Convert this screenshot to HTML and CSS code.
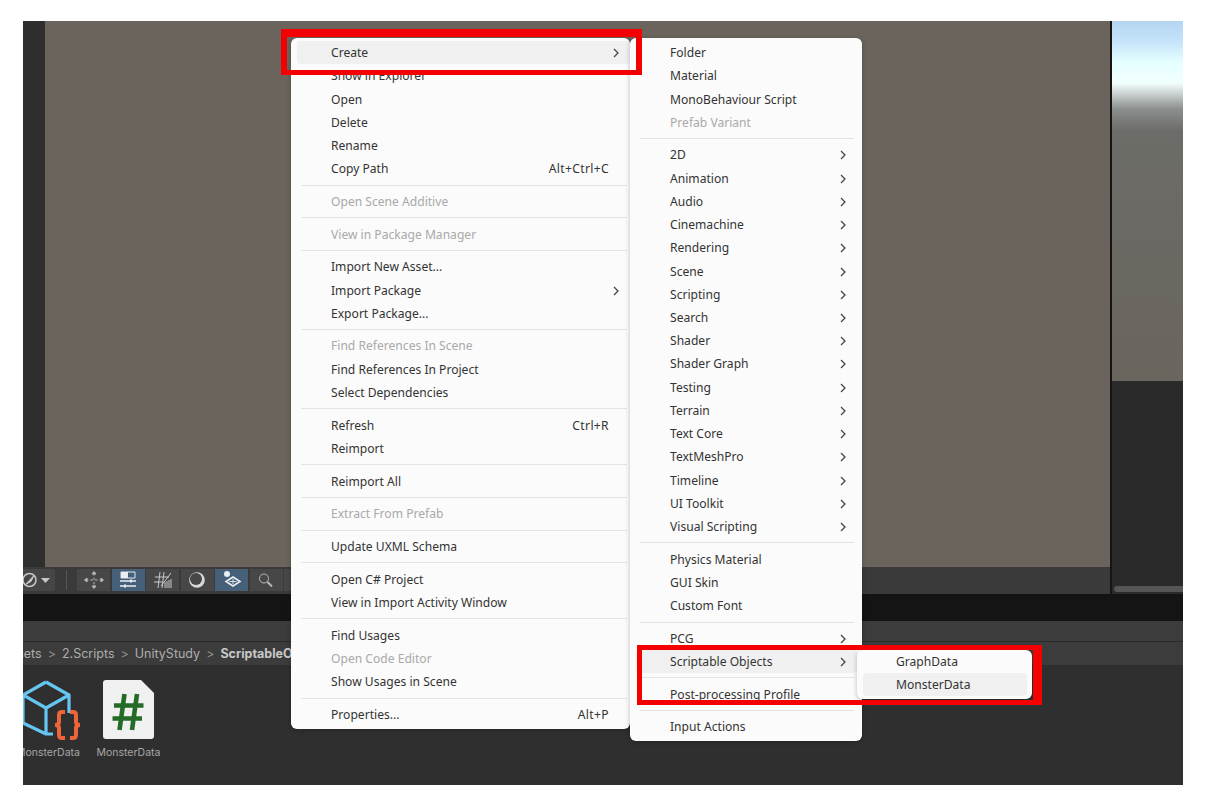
FILE: index.html
```html
<!DOCTYPE html>
<html lang="en">
<head>
<meta charset="utf-8">
<title>Unity Create Scriptable Object menu</title>
<link rel="stylesheet" href="styles.css">
</head>
<body>
<div class="app">
  <div class="upper">
    <div class="strip"></div>
    <div class="scene">
      <div class="viewport"></div>
      <div class="toolbar">
        <div class="tool-drop">
          <svg width="32" height="22" viewBox="0 0 32 22"><circle cx="6.500" cy="11" r="6.500" fill="none" stroke="#c8c8c8" stroke-width="1.500"/><path d="M2.500 15.500 11 6.500 8 12.500z" fill="#c8c8c8" stroke="#c8c8c8"/><path d="M18 9h9l-4.500 5z" fill="#c8c8c8"/></svg>
        </div>
        <div class="tool-sep"></div>
        <div class="tool-group">
          <div class="tool"><svg width="22" height="20" viewBox="0 0 22 20" fill="none" stroke="#b8b8b8" stroke-width="1"><path d="M11 3v14M3 10h16" stroke-dasharray="2.500 2"/><path d="M9 4l2-2.500L13 4zM9 16l2 2.500L13 16zM4 8l-2.500 2L4 12zM18 8l2.500 2L18 12z" fill="#b8b8b8"/></svg></div>
          <div class="tool on"><svg width="22" height="20" viewBox="0 0 22 20"><path d="M4 2h14v6H4z" fill="none" stroke="#dfe6ec"/><path d="M4 2h7v6H4z" fill="#e8eef2"/><path d="M3 11h16M3 16h16" stroke="#e8eef2" stroke-width="1.300"/><path d="M13 9.500h2v3h-2zM7 14.500h2v3H7z" fill="#e8eef2"/></svg></div>
          <div class="tool"><svg width="22" height="20" viewBox="0 0 22 20" fill="none" stroke="#c8c8c8" stroke-width="1"><path d="M8 2 6 18M12 2l-2 16M3 7h14M2 12h8M19 3 9 16M13 18v-6M15 18v-7M17 18v-8M19 18V9"/></svg></div>
          <div class="tool"><svg width="22" height="20" viewBox="0 0 22 20"><circle cx="11" cy="10" r="7.800" fill="#d8d8d8"/><circle cx="10" cy="9" r="6" fill="#474747"/></svg></div>
          <div class="tool on"><svg width="22" height="20" viewBox="0 0 22 20"><circle cx="6" cy="4" r="3" fill="#e8eef2"/><path d="M12 7l7 4.500-7 4.500-7-4.500z" fill="none" stroke="#e8eef2" stroke-width="1.600"/><path d="M8.500 11.500h7M12 9v5" stroke="#e8eef2" stroke-width=".9"/></svg></div>
          <div class="tool"><svg width="22" height="20" viewBox="0 0 22 20" fill="none" stroke="#b8b8b8"><circle cx="9" cy="8.500" r="4.500"/><path d="M12.500 12 17 16.500" stroke-width="2"/></svg></div>
          <div class="tool"></div>
        </div>
      </div>
    </div>
    <div class="side">
      <div class="sky"></div>
      <div class="inspector"><div class="scrollbar"></div></div>
    </div>
  </div>
  <div class="band"></div>
  <div class="tabs"></div>
  <div class="path">
    <span>Assets</span><i>&gt;</i><span>2.Scripts</span><i>&gt;</i><span>UnityStudy</span><i>&gt;</i><b>ScriptableObjects</b>
  </div>
  <div class="assets">
    <div class="asset asset-so">
      <svg width="70" height="60" viewBox="0 0 70 60" fill="none">
        <path d="M33 2 56 15V33M33 2 10 15V43L33 54H40M10 15 33 28 56 15M33 28V54" stroke="#66c6f2" stroke-width="3.200" stroke-linejoin="round"/>
        <path d="M52 32h-3q-3 0-3 3v7q0 3-4 3q4 0 4 3v7q0 3 3 3h3M57 32h3q3 0 3 3v7q0 3 4 3q-4 0-4 3v7q0 3-3 3h-3" stroke="#f0643a" stroke-width="4"/>
      </svg>
      <div class="asset-name">MonsterData</div>
    </div>
    <div class="asset asset-cs">
      <svg class="script" width="51" height="59" viewBox="0 0 51 59">
        <path d="M3 0H38L51 13V56Q51 59 48 59H3Q0 59 0 56V3Q0 0 3 0z" fill="#f0f0f0"/>
        <path d="M21.500 14 16.500 50M34 14 29 50M11 25.500H40.500M9.500 38.500H39" stroke="#236b27" stroke-width="4.600" fill="none"/>
      </svg>
      <div class="asset-name">MonsterData</div>
    </div>
  </div>

  <div class="menu menu-main">
    <div class="row hot"><span>Create</span><svg class="chev" viewBox="0 0 8 10"><path d="M2 1l4 4-4 4"/></svg></div>
    <div class="row"><span>Show in Explorer</span></div>
    <div class="row"><span>Open</span></div>
    <div class="row"><span>Delete</span></div>
    <div class="row"><span>Rename</span></div>
    <div class="row"><span>Copy Path</span><em>Alt+Ctrl+C</em></div>
    <hr>
    <div class="row off"><span>Open Scene Additive</span></div>
    <hr>
    <div class="row off"><span>View in Package Manager</span></div>
    <hr>
    <div class="row"><span>Import New Asset...</span></div>
    <div class="row"><span>Import Package</span><svg class="chev" viewBox="0 0 8 10"><path d="M2 1l4 4-4 4"/></svg></div>
    <div class="row"><span>Export Package...</span></div>
    <hr>
    <div class="row off"><span>Find References In Scene</span></div>
    <div class="row"><span>Find References In Project</span></div>
    <div class="row"><span>Select Dependencies</span></div>
    <hr>
    <div class="row"><span>Refresh</span><em>Ctrl+R</em></div>
    <div class="row"><span>Reimport</span></div>
    <hr>
    <div class="row"><span>Reimport All</span></div>
    <hr>
    <div class="row off"><span>Extract From Prefab</span></div>
    <hr>
    <div class="row"><span>Update UXML Schema</span></div>
    <hr>
    <div class="row"><span>Open C# Project</span></div>
    <div class="row"><span>View in Import Activity Window</span></div>
    <hr>
    <div class="row"><span>Find Usages</span></div>
    <div class="row off"><span>Open Code Editor</span></div>
    <div class="row"><span>Show Usages in Scene</span></div>
    <hr>
    <div class="row"><span>Properties...</span><em>Alt+P</em></div>
  </div>

  <div class="menu menu-sub">
    <div class="row"><span>Folder</span></div>
    <div class="row"><span>Material</span></div>
    <div class="row"><span>MonoBehaviour Script</span></div>
    <div class="row off"><span>Prefab Variant</span></div>
    <hr>
    <div class="row"><span>2D</span><svg class="chev" viewBox="0 0 8 10"><path d="M2 1l4 4-4 4"/></svg></div>
    <div class="row"><span>Animation</span><svg class="chev" viewBox="0 0 8 10"><path d="M2 1l4 4-4 4"/></svg></div>
    <div class="row"><span>Audio</span><svg class="chev" viewBox="0 0 8 10"><path d="M2 1l4 4-4 4"/></svg></div>
    <div class="row"><span>Cinemachine</span><svg class="chev" viewBox="0 0 8 10"><path d="M2 1l4 4-4 4"/></svg></div>
    <div class="row"><span>Rendering</span><svg class="chev" viewBox="0 0 8 10"><path d="M2 1l4 4-4 4"/></svg></div>
    <div class="row"><span>Scene</span><svg class="chev" viewBox="0 0 8 10"><path d="M2 1l4 4-4 4"/></svg></div>
    <div class="row"><span>Scripting</span><svg class="chev" viewBox="0 0 8 10"><path d="M2 1l4 4-4 4"/></svg></div>
    <div class="row"><span>Search</span><svg class="chev" viewBox="0 0 8 10"><path d="M2 1l4 4-4 4"/></svg></div>
    <div class="row"><span>Shader</span><svg class="chev" viewBox="0 0 8 10"><path d="M2 1l4 4-4 4"/></svg></div>
    <div class="row"><span>Shader Graph</span><svg class="chev" viewBox="0 0 8 10"><path d="M2 1l4 4-4 4"/></svg></div>
    <div class="row"><span>Testing</span><svg class="chev" viewBox="0 0 8 10"><path d="M2 1l4 4-4 4"/></svg></div>
    <div class="row"><span>Terrain</span><svg class="chev" viewBox="0 0 8 10"><path d="M2 1l4 4-4 4"/></svg></div>
    <div class="row"><span>Text Core</span><svg class="chev" viewBox="0 0 8 10"><path d="M2 1l4 4-4 4"/></svg></div>
    <div class="row"><span>TextMeshPro</span><svg class="chev" viewBox="0 0 8 10"><path d="M2 1l4 4-4 4"/></svg></div>
    <div class="row"><span>Timeline</span><svg class="chev" viewBox="0 0 8 10"><path d="M2 1l4 4-4 4"/></svg></div>
    <div class="row"><span>UI Toolkit</span><svg class="chev" viewBox="0 0 8 10"><path d="M2 1l4 4-4 4"/></svg></div>
    <div class="row"><span>Visual Scripting</span><svg class="chev" viewBox="0 0 8 10"><path d="M2 1l4 4-4 4"/></svg></div>
    <hr>
    <div class="row"><span>Physics Material</span></div>
    <div class="row"><span>GUI Skin</span></div>
    <div class="row"><span>Custom Font</span></div>
    <hr>
    <div class="row"><span>PCG</span><svg class="chev" viewBox="0 0 8 10"><path d="M2 1l4 4-4 4"/></svg></div>
    <div class="row hot"><span>Scriptable Objects</span><svg class="chev" viewBox="0 0 8 10"><path d="M2 1l4 4-4 4"/></svg></div>
    <hr>
    <div class="row"><span>Post-processing Profile</span></div>
    <hr>
    <div class="row"><span>Input Actions</span></div>
  </div>

  <div class="menu menu-third">
    <div class="row"><span>GraphData</span></div>
    <div class="row hot"><span>MonsterData</span></div>
  </div>

  <div class="frame frame-create"></div>
  <div class="frame frame-scriptable"></div>
</div>
</body>
</html>
```
FILE: styles.css
```css
html, body { margin: 0; padding: 0; background: #fff; }
body { padding: 21px 0 0 23px; height: 802px; box-sizing: border-box; overflow: hidden; }

.app {
  position: relative;
  width: 1160px;
  height: 764px;
  display: flex;
  flex-direction: column;
  overflow: hidden;
  background: #2f2f2f;
}

.upper { display: flex; height: 573px; flex: none; }
.strip { width: 22px; background: #2e2e2e; }
.scene { flex: 1; display: flex; flex-direction: column; }
.viewport { flex: 1; background: #6a645c; }
.toolbar {
  height: 27px;
  margin-left: -22px;
  padding-bottom: 2px;
  box-sizing: border-box;
  background: #3a3a3a;
  display: flex;
  align-items: center;
  position: relative;
}
.tool-drop { width: 32px; height: 22px; background: #464646; border-radius: 0 3px 3px 0; }
.tool-sep { width: 1px; height: 20px; margin: 0 10px 0 11px; background: #555; }
.tool-group { display: flex; gap: 1.500px; }
.tool {
  width: 33px;
  height: 22px;
  background: #474747;
  display: flex;
  align-items: center;
  justify-content: center;
}
.tool.on { background: #46607a; }

.side { width: 73px; flex: none; border-left: 2px solid #151515; box-sizing: border-box; display: flex; flex-direction: column; }
.sky {
  height: 360px;
  background: linear-gradient(#b4d4f1 0, #c5e4fa 20px, #e6ffff 42px, #f2ffff 62px, #c6cccb 74px, #8b8f8e 88px, #6c6c68 110px, #6a655d 360px);
}
.inspector { flex: 1; background: #2a2a2a; display: flex; flex-direction: column; justify-content: flex-end; }
.scrollbar { height: 6px; margin: 0 0 2px 2px; border-radius: 3px 0 0 3px; background: #555; }

.band { height: 27px; flex: none; background: #141414; }
.tabs { height: 20px; flex: none; background: #3c3c3c; border-bottom: 1px solid #2a2a2a; }
.path {
  height: 23px;
  flex: none;
  background: #3c3c3c;
  display: flex;
  align-items: center;
  gap: 6px;
  margin-left: -21px;
  padding-top: 2px;
  box-sizing: border-box;
  font: 12.500px/1 Inter, "Liberation Sans", sans-serif;
  color: #adadad;
  white-space: nowrap;
}
.path i { font-style: normal; color: #8f8f8f; }
.path b { color: #c8c8c8; font-weight: 700; }

.assets { flex: 1; display: flex; gap: 13.500px; padding-top: 15px; margin-left: -10px; }
.asset { display: flex; flex-direction: column; align-items: center; }
.asset-so { width: 70px; }
.asset-cs { width: 64px; }
.asset-so .asset-name { margin-top: 7px; }
.asset-cs .asset-name { margin-top: 8px; }
.asset-name { font: 10.500px/12px Inter, "Liberation Sans", sans-serif; color: #a6a6a6; white-space: nowrap; }
.script { display: block; flex: none; }

.menu {
  position: absolute;
  box-sizing: border-box;
  background: #fbfbfb;
  border-radius: 6px;
  box-shadow: 0 1px 5px rgba(0, 0, 0, .25);
  font: 12.100px/1 "Noto Sans", sans-serif;
  color: #333;
}
.menu-main { left: 268px; top: 17px; width: 339px; height: 691px; padding: 3px 0 0 6px; }
.menu-sub { left: 607px; top: 17px; width: 232px; height: 703px; padding: 3px 5px 0 6px; }
.menu-third { left: 834px; top: 629px; width: 175px; height: 49px; padding: 0 5px 0 6px; }

.row {
  height: 23.220px;
  display: flex;
  align-items: center;
  justify-content: space-between;
  border-radius: 4px;
  padding: 1px 10px 0 34px;
  white-space: nowrap;
  box-sizing: border-box;
}
.menu-main em { font-style: normal; margin-right: 11px; letter-spacing: .35px; }
.menu-third .row { padding-left: 33px; }
.row.hot { background: #f0f0f0; }
.row.off { color: #a9a9a9; }
.chev { width: 8px; height: 10px; fill: none; stroke: #444; stroke-width: 1.300; }
hr { height: 1px; border: 0; background: #e3e3e3; margin: 4.250px 3px 4.250px 4px; }

.frame { position: absolute; box-sizing: border-box; border-style: solid; border-color: #f30000; }
.frame-create { left: 258px; top: 8px; width: 361px; height: 46px; border-width: 8px 6px 5px; }
.frame-scriptable { left: 614px; top: 624px; width: 405px; height: 60px; border-width: 5px 9px 5px 5px; }
```
